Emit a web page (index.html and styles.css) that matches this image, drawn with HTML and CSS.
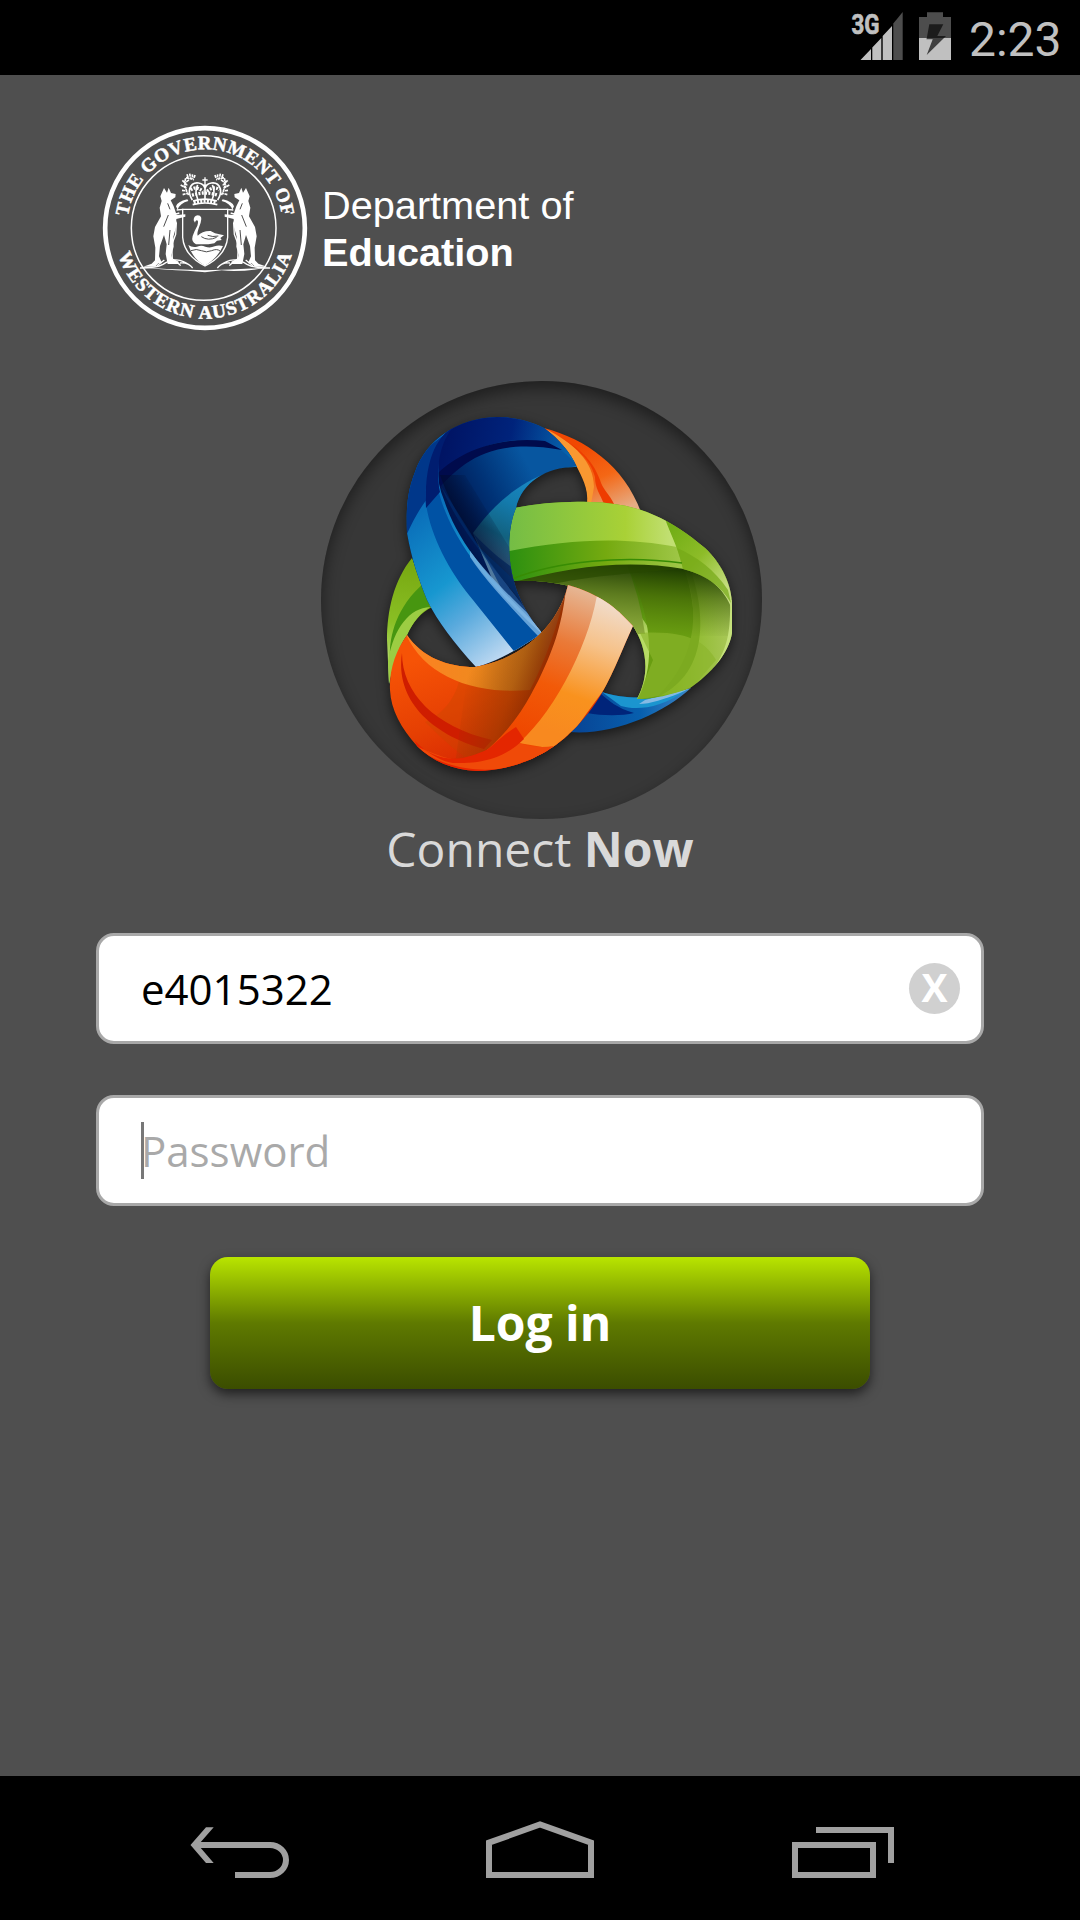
FILE: index.html
```html
<!DOCTYPE html>
<html lang="en">
<head>
<meta charset="utf-8">
<title>Connect Now</title>
<link rel="stylesheet" href="styles.css">
</head>
<body>
<header class="status">
  <svg class="signal" viewBox="850 0 56 75" width="56" height="75">
    <text class="network" x="851.5" y="33.7" textLength="28" lengthAdjust="spacingAndGlyphs">3G</text>
    <path fill="#c0c0c0" d="M860.5 60 871 49v11zM872.3 60V47.5L881.3 38v22zM882.7 60V36L892 26v34z"/>
    <path fill="#4d4d4d" d="M893.3 60V23.5L902.7 12v48z"/>
  </svg>
  <svg class="battery" viewBox="919 0 32 75" width="32" height="75">
    <path fill="#4d4d4d" d="M927 12.3h16V17h8v21h-32V17h8z"/>
    <path fill="#c0c0c0" d="M919 38h32v22h-32z"/>
    <path fill="#1c1c1c" d="M929.3 24.3h14L937.3 36h8.700l-2 2h-17.200z"/>
    <path fill="#404040" d="M926.8 38H944l-17.300 17 6-15.700h-6.300z"/>
  </svg>
  <span class="clock">2:23</span>
</header>

<main class="screen">
  <div class="brand">
    <svg class="seal" viewBox="0 0 690 675" width="230" height="225">
      <defs>
        <path id="arc-top" d="M114.500 370A233 233 0 1 1 575.500 370"/>
        <path id="arc-bottom" d="M73 339A272 272 0 0 0 617 339"/>
      </defs>
      <circle class="ring" cx="345" cy="339" r="299.500" stroke-width="14"/>
      <circle class="ring" cx="341" cy="339" r="217" stroke-width="4.500"/>
      <text class="motto"><textPath href="#arc-top" startOffset="50%" text-anchor="middle" textLength="668">THE GOVERNMENT OF</textPath></text>
      <text class="motto"><textPath href="#arc-bottom" startOffset="50%" text-anchor="middle" textLength="690">WESTERN AUSTRALIA</textPath></text>

      <!-- supporters, plume and foliage, one half mirrored to the other -->
      <defs>
        <g id="half">
          <path fill="#fff" d="M222 219l9 14 5-15 7 16 14 3-1 10-14 9 9 18 9 26 26-2v7l-27 7-1 25-8 28 1 30-7 25 4 17 17 4v6h-32l-6-30 3-29-8-28-12 33-3 31 9 21h-11l-10 10h-36l26-9 10-10 1-38-6-34 5-28 18-32-4-26 6-20-4-14z"/>
          <path class="cut" d="M235 300l-14 35M240 345l-4 45M233 265l7 18M219 375l-6 35"/>
          <path class="line" d="M251 306l8 18-2 34-12 32 2 42 18 10M223 435l-22 17"/>
          <path fill="#fff" d="M258 274q4-14 34-21l3 5q-25 6-32 26z"/>
          <path class="line" d="M280 283l-20 2M268 294q-22 8-20-5"/>
          <path class="leaf" d="M291 178l5 14M299 176l3 15M307 178l1 13M315 180l-3 10M288 188l24 6M277 196l16 16M272 210l18 10M276 226l15 2M278 239l17-5M287 190q-7 24 9 50M297 195q-16 8-14 22"/>
          <path class="line" d="M150 459q50 0 69-11 27-18 51-12 22 7 32 17M270 444q25-2 38 15M246 438q16 2 26 14"/>
        </g>
      </defs>
      <use href="#half"/>
      <use href="#half" transform="matrix(-1 0 0 1 690 0)"/>
      <path fill="#fff" d="M150 457q195 17 387 0-80 15-142 9l-50 6-52-5q-68-1-143-10z"/>

      <!-- crown -->
      <path class="crown" d="M307 255q-12-20-8-34 7-20 27-17 15 2 19 16 4-14 19-16 20-3 27 17 4 14-8 34M309 258q36-11 72 0M308 269q38-10 74 0M345 205v45M323 210q-10 18 0 42M367 210q10 18 0 42"/>
      <path class="beads" d="M302 225q15-14 37 4M351 229q22-18 37-4M306 241q39-14 78 0M311 263q34-9 68 0"/>
      <path class="line" d="M345 187v18M337 195h16"/>

      <!-- shield with the black swan -->
      <path class="shield" d="M278 283h135v84q-5 54-68 86-63-32-67-86z"/>
      <path fill="#fff" d="M295 390q12 9 26 5 13-5 25 0 14 5 28-1 11-5 25-1-17 37-54 59-36-19-50-62z"/>
      <path class="cut" d="M303 407q16-7 31 0t31 0 25 1"/>
      <path fill="#fff" d="M311 316q0-14 12-15 16 1 9 22-13 33-9 39 14-15 39-14l13 7 27 6-11 8 4 6-14 2-8 8-18 3h-37q-15-8-10-25 4-13 14-31 5-16-2-16-4 1-5 7z"/>
      <path class="cut" d="M334 365q20 14 46 2M353 361q15 6 32 2"/>
    </svg>
    <div class="agency">Department of<br><b>Education</b></div>
  </div>

  <div class="disc">
    <svg class="knot" viewBox="321 381 441 438" width="441" height="438">
      <defs>
        <linearGradient id="b-front" gradientUnits="userSpaceOnUse" x1="410" y1="520" x2="515" y2="655">
          <stop offset="0" stop-color="#0a6fba"/><stop offset=".42" stop-color="#1797d0"/><stop offset=".65" stop-color="#5aaadd"/><stop offset="1" stop-color="#c9def4"/>
        </linearGradient>
        <linearGradient id="b-top" gradientUnits="userSpaceOnUse" x1="445" y1="440" x2="570" y2="465">
          <stop offset="0" stop-color="#001464"/><stop offset=".5" stop-color="#00237b"/><stop offset="1" stop-color="#0768b0"/>
        </linearGradient>
        <linearGradient id="b-in" gradientUnits="userSpaceOnUse" x1="455" y1="520" x2="535" y2="478">
          <stop offset="0" stop-color="#00154d"/><stop offset=".5" stop-color="#003377"/><stop offset="1" stop-color="#0756a0"/>
        </linearGradient>
        <linearGradient id="b-teal" gradientUnits="userSpaceOnUse" x1="545" y1="470" x2="495" y2="570">
          <stop offset="0" stop-color="#1b8dcb"/><stop offset=".4" stop-color="#147bad"/><stop offset=".7" stop-color="#12617f"/><stop offset="1" stop-color="#50799e"/>
        </linearGradient>
        <linearGradient id="b-crease" gradientUnits="userSpaceOnUse" x1="466" y1="550" x2="505" y2="525">
          <stop offset="0" stop-color="#000b2c" stop-opacity=".95"/><stop offset="1" stop-color="#000b2c" stop-opacity="0"/>
        </linearGradient>
        <linearGradient id="g-top" gradientUnits="userSpaceOnUse" x1="510" y1="0" x2="732" y2="0">
          <stop offset="0" stop-color="#74bd45"/><stop offset=".52" stop-color="#a9d136"/><stop offset=".72" stop-color="#c1df72"/><stop offset="1" stop-color="#c1df72"/>
        </linearGradient>
        <linearGradient id="g-mid" gradientUnits="userSpaceOnUse" x1="510" y1="0" x2="685" y2="0">
          <stop offset="0" stop-color="#2d9010"/><stop offset=".55" stop-color="#75aa10"/><stop offset="1" stop-color="#a1c84a"/>
        </linearGradient>
        <linearGradient id="g-right" gradientUnits="userSpaceOnUse" x1="670" y1="530" x2="728" y2="585">
          <stop offset="0" stop-color="#72ae16"/><stop offset=".5" stop-color="#8dbc28"/><stop offset="1" stop-color="#c5dd80"/>
        </linearGradient>
        <linearGradient id="g-in" gradientUnits="userSpaceOnUse" x1="640" y1="0" x2="732" y2="0">
          <stop offset="0" stop-color="#67a713"/><stop offset=".4" stop-color="#85b61e"/><stop offset="1" stop-color="#aac85a"/>
        </linearGradient>
        <linearGradient id="g-shade" gradientUnits="userSpaceOnUse" x1="630" y1="564" x2="625" y2="632">
          <stop offset="0" stop-color="#142f00" stop-opacity=".92"/><stop offset=".45" stop-color="#2c4b00" stop-opacity=".5"/><stop offset="1" stop-color="#385c00" stop-opacity="0"/>
        </linearGradient>
        <linearGradient id="g-back" gradientUnits="userSpaceOnUse" x1="405" y1="565" x2="392" y2="680">
          <stop offset="0" stop-color="#78a912"/><stop offset=".5" stop-color="#8abf24"/><stop offset="1" stop-color="#c6e58b"/>
        </linearGradient>
        <linearGradient id="o-right" gradientUnits="userSpaceOnUse" x1="610" y1="595" x2="560" y2="735">
          <stop offset="0" stop-color="#f0e0d5"/><stop offset=".35" stop-color="#f6c28a"/><stop offset=".72" stop-color="#f9921e"/><stop offset="1" stop-color="#f8891f"/>
        </linearGradient>
        <linearGradient id="o-mid" gradientUnits="userSpaceOnUse" x1="580" y1="590" x2="530" y2="735">
          <stop offset="0" stop-color="#e6b592"/><stop offset=".35" stop-color="#ea7a38"/><stop offset=".65" stop-color="#f25a08"/><stop offset="1" stop-color="#ef4800"/>
        </linearGradient>
        <linearGradient id="o-in" gradientUnits="userSpaceOnUse" x1="415" y1="660" x2="455" y2="765">
          <stop offset="0" stop-color="#f65306"/><stop offset=".6" stop-color="#e64003"/><stop offset="1" stop-color="#da2c02"/>
        </linearGradient>
        <linearGradient id="o-shade" gradientUnits="userSpaceOnUse" x1="468" y1="675" x2="540" y2="700">
          <stop offset="0" stop-color="#8a3800" stop-opacity="0"/><stop offset=".6" stop-color="#8a3800" stop-opacity=".5"/><stop offset="1" stop-color="#852500" stop-opacity=".95"/>
        </linearGradient>
        <linearGradient id="o-lip" gradientUnits="userSpaceOnUse" x1="410" y1="0" x2="565" y2="0">
          <stop offset="0" stop-color="#fc8122"/><stop offset=".45" stop-color="#f08a1e"/><stop offset=".85" stop-color="#c98426"/><stop offset="1" stop-color="#c9926c"/>
        </linearGradient>
        <linearGradient id="o-back" gradientUnits="userSpaceOnUse" x1="590" y1="440" x2="622" y2="510">
          <stop offset="0" stop-color="#f14802"/><stop offset=".5" stop-color="#f46715"/><stop offset="1" stop-color="#e6ac84"/>
        </linearGradient>
        <linearGradient id="b-back" gradientUnits="userSpaceOnUse" x1="580" y1="0" x2="690" y2="0">
          <stop offset="0" stop-color="#084797"/><stop offset=".55" stop-color="#075fae"/><stop offset="1" stop-color="#3d86c6"/>
        </linearGradient>
        <clipPath id="c-green"><path d="M514 508C540 503 565 501 590 502 640 503 672 520 705 548 722 564 732 585 732 605V633C729 653 711 674 690 688 670 695 655 699 637 699 651 673 646 646 633 626 620 612 605 600 569 586 550 581 530 580 513 581 507 560 508 530 514 508z"/></clipPath>
        <clipPath id="c-orange"><path d="M568 585C599 594 616 607 633 626 624 645 615 670 602 693 594 706 584 720 571 732 552 751 520 770 477 771 452 770 432 761 417 746 401 728 391 710 390 690 389 670 396 650 407 635 422 657 447 667 475 667 521 659 558 627 568 585z"/></clipPath>
        <clipPath id="c-blue"><path d="M497 417C517 417 532 422 544 428 560 440 570 452 577 467 549 466 522 481 516 508 506 532 507 568 519 596 525 611 533 622 542 633 525 645 498 662 476 667 454 643 438 622 427 600 418 577 412 561 407 533 406 504 408 490 415 472 426 440 457 418 497 417z"/></clipPath>
      </defs>

      <!-- rear loops -->
      <path fill="url(#o-back)" d="M544 428C586 439 624 466 641 512L588 504C588 490 585 478 577 467 570 452 560 440 544 428z"/>
      <path fill="#f99831" d="M546 429C574 443 594 462 594 487L591 504h-4C589 488 581 476 577 467 569 451 560 440 546 429z"/>
      <path fill="#ee3c00" d="M553 433C577 446 592 458 600 480 603 490 609 493 615 506L604 504C600 494 595 488 595 477 591 459 573 444 553 433z"/>
      <path fill="url(#g-back)" d="M412 558C394 580 387 610 387 640L389 684C393 660 400 643 407 635 414 620 421 613 432 607z"/>
      <path fill="#479610" d="M424 583C397 606 389 636 390 657 402 627 415 614 430 607z"/>
      <path fill="#9ccd43" d="M430 607C410 608 394 627 388 661L389 684C395 659 400 644 407 635 413 622 420 613 430 607z"/>
      <path fill="url(#b-back)" d="M602 692C631 702 668 697 691 688 664 713 613 736 569 732z"/>
      <path fill="#1b95cf" d="M602 692C631 702 668 697 688 689 659 710 635 710 621 706z"/>
      <path fill="#00247a" d="M600 693C609 701 617 708 634 713 622 716 603 716 587 713z"/>
      <path fill="#85bae4" d="M645 700L691 688 680 693C665 699 650 704 639 704z"/>

      <!-- green loop -->
      <g clip-path="url(#c-green)">
        <path fill="url(#g-in)" d="M500 500h240v205H500z"/>
        <path fill="#b7da65" d="M602 596C630 600 648 620 653 640 656 667 645 688 636 701L620 700z"/>
        <path fill="#8dab3d" d="M500 560H625Q640 596 645 634H620z"/>
        <path fill="#699d11" d="M627 563C650 615 658 660 637 701 690 700 707 638 684 567z"/>
        <path fill="#8cb62c" d="M640 633C690 630 706 643 716 660L690 690 637 700 653 660z" opacity=".65"/>
        <path fill="#7caa20" d="M683 567C698 600 702 655 657 697 713 672 703 606 691 571z"/>
        <path fill="url(#g-shade)" d="M500 561h242v75H500z"/>
        <path fill="#c5e17b" d="M730 600C731 640 725 656 704 680L714 674 737 635V600z"/>
        <path fill="#284800" d="M500 584C560 565 615 560 684 568 665 572 573 575 542 588z" opacity=".65"/>
        <path fill="url(#g-mid)" d="M500 535H677L684 569C626 559 568 566 500 586z"/>
        <path fill="url(#g-top)" d="M500 500H658L677 547C625 537 570 538 500 553z"/>
        <path fill="url(#g-right)" d="M665 519C672 537 680 553 683 569 711 576 724 590 731 607L741 590 706 540z"/>
        <path fill="#75a817" d="M677 548C696 556 715 570 728 590L731 603C721 586 706 575 683 569z" opacity=".7"/>
        <path fill="none" stroke="#388c04" stroke-width="1.500" d="M512 579C557 561 624 555 682 563"/>
      </g>

      <!-- blue loop -->
      <g clip-path="url(#c-blue)">
        <path fill="url(#b-in)" d="M400 410h185v262H400z"/>
        <path fill="url(#b-teal)" d="M473 533C497 500 531 470 580 466L590 520 530 670z"/>
        <path fill="#002f75" d="M473 533C487 548 500 559 513 568L540 633 520 625z" opacity=".7"/>
        <path fill="url(#b-top)" d="M430 405H555L577 465C563 450 554 444 544 442 510 435 467 446 438 477z"/>
        <path fill="#000b4c" d="M437 474C463 448 505 436 545 441L562 450C496 438 466 458 440 487z"/>
        <path fill="url(#b-crease)" d="M440 475C452 510 473 542 525 608L545 606 500 532 465 475z"/>
        <path fill="url(#b-front)" d="M465 417C436 433 432 472 444 500 458 543 490 581 543 631L520 672H475L400 600V410z"/>
        <path fill="#00378a" d="M470 415C440 426 433 458 439 485 424 501 416 514 406 536L398 470z"/>
        <path fill="#0052a4" d="M438 455C427 475 423 490 427 510 434 545 454 577 473 600L517 655 543 635C495 591 453 545 439 493z"/>
        <path fill="#001d70" d="M455 425C435 438 424 463 426 508L440 492C435 468 440 441 455 425z"/>
        <path fill="#75afe0" d="M470 557C485 580 509 605 538 636L544 629C516 602 490 578 470 551z" opacity=".85"/>
        <path fill="#00306f" d="M441 486C461 536 506 581 543 628L541 605 480 548z" opacity=".55"/>
      </g>

      <!-- orange loop -->
      <g clip-path="url(#c-orange)">
        <path fill="url(#o-in)" d="M380 580h265v200H380z"/>
        <path fill="#c04a00" d="M459 681C455 700 440 716 425 722 440 736 460 757 475 762L550 700V685z" opacity=".3"/>
        <path fill="url(#o-lip)" d="M404 630C422 675 471 695 530 690 546 660 558 624 569 580L500 640z"/>
        <path fill="#cf1d00" d="M402 653C402 693 435 727 492 740L484 749C430 734 395 699 402 653z"/>
        <path fill="url(#o-shade)" d="M569 578C560 600 510 640 470 655L455 764 500 750C548 712 562 648 575 588z"/>
        <path fill="#e82400" d="M415 741C430 758 450 761 463 758 487 752 500 744 512 731L560 700 580 780H430z"/>
        <path fill="url(#o-mid)" d="M567 580C563 620 556 644 540 677 528 701 516 724 487 750L540 762 620 640V580z"/>
        <path fill="url(#o-right)" d="M598 588C592 637 558 708 519 743L560 750 640 640V590z"/>
        <path fill="#f04a08" d="M519 743C530 747 542 748 554 746 521 776 453 780 411 743 453 766 488 768 519 743z"/>
        <path fill="#e42600" d="M487 750C498 741 507 732 516 727L524 739C504 759 480 764 453 763 443 762 432 755 425 750 448 765 475 758 487 750z"/>
      </g>
    </svg>
  </div>

  <h1 class="product">Connect <b>Now</b></h1>

  <form class="login">
    <div class="field">
      <span class="value">e4015322</span>
      <span class="clear">X</span>
    </div>
    <div class="field">
      <span class="caret"></span><span class="hint">Password</span>
    </div>
    <button class="submit" type="button">Log in</button>
  </form>
</main>

<nav class="system">
  <svg viewBox="180 1776 120 144" width="120" height="144">
    <path fill="#a0a0a0" d="M190.500 1845l15.500-17.700h7.700L200.800 1842H270a19 18 0 0 1 0 36h-35v-6h35a13 12 0 0 0 0-24h-69.200l12.900 15H206z"/>
  </svg>
  <svg viewBox="480 1776 120 144" width="120" height="144">
    <path class="outline" d="M489 1842.700l51-18.200 51 18.200V1875H489z"/>
  </svg>
  <svg viewBox="780 1776 120 144" width="120" height="144">
    <path class="outline" d="M795 1845h78v30h-78zM816 1830h75v33"/>
  </svg>
</nav>
</body>
</html>
```

FILE: styles.css
```css
* { box-sizing: border-box; }

body {
  margin: 0;
  width: 1080px;
  height: 1920px;
  display: flex;
  flex-direction: column;
  overflow: hidden;
  background: #4f4f4f;
  font-family: "Open Sans", "Noto Sans", sans-serif;
}

svg { display: block; flex: none; }

.status {
  height: 75px;
  flex: none;
  display: flex;
  justify-content: flex-end;
  padding-right: 18px;
  background: #000;
}
.battery { margin-left: 13px; }
.network { font: 700 27px Roboto, sans-serif; fill: #c0c0c0; stroke: #c0c0c0; stroke-width: .7; }
.clock {
  width: 93px;
  margin-left: 18px;
  font: 400 48px/79px Roboto, sans-serif;
  color: #c0c0c0;
  white-space: nowrap;
}

.screen {
  flex: 1;
  display: flex;
  flex-direction: column;
  align-items: center;
}

.brand {
  align-self: stretch;
  display: flex;
  height: 225px;
  padding-left: 90px;
  margin-top: 40px;
}
.agency {
  padding: 67px 0 0 2px;
  font: 39.7px/47px "Liberation Sans", Arial, sans-serif;
  color: #fff;
  white-space: nowrap;
}
.ring { fill: none; stroke: #fff; }
.motto { font: 700 57px "Liberation Serif", serif; fill: #fff; stroke: #fff; stroke-width: 1.5; }
.line, .leaf, .crown, .beads, .shield { fill: none; stroke: #fff; stroke-width: 4; }
.leaf { stroke-width: 5; stroke-dasharray: 9 2; }
.crown { stroke-width: 5; }
.beads { stroke-width: 10; stroke-dasharray: 6 4; }
.cut { fill: none; stroke: #4f4f4f; stroke-width: 3; }

.disc {
  width: 441px;
  height: 438px;
  margin: 41px 0 0 3px;
  border-radius: 50%;
  background: #373737;
  box-shadow: inset 0 7px 16px rgba(0, 0, 0, .45);
}
.knot { filter: drop-shadow(0 4px 6px rgba(0, 0, 0, .55)); }

.product {
  margin: 0;
  font-size: 48px;
  line-height: 60px;
  font-weight: 400;
  color: #d9d9d9;
}

.login {
  width: 888px;
  margin-top: 54px;
  display: flex;
  flex-direction: column;
  align-items: center;
  gap: 51px;
}
.field {
  width: 100%;
  height: 111px;
  display: flex;
  align-items: center;
  padding: 0 21px 0 42px;
  border: 3px solid #a8a8a8;
  border-radius: 18px;
  background: #fff;
  font-size: 42px;
  line-height: 57px;
  color: #000;
}
.clear {
  width: 51px;
  height: 51px;
  margin-left: auto;
  border-radius: 50%;
  background: #d0d0d0;
  color: #fff;
  font-size: 39px;
  font-weight: 700;
  line-height: 48px;
  text-align: center;
}
.caret { width: 3px; height: 57px; margin-right: -3px; background: #777; }
.hint { color: #a9a9a9; }

.submit {
  width: 660px;
  height: 132px;
  padding: 0 0 2px;
  border: 0;
  border-radius: 18px;
  background: linear-gradient(#b9e500, #5f7a00 50%, #3b4d00);
  box-shadow: 0 5px 12px rgba(0, 0, 0, .6);
  font: 700 48px/65px "Open Sans", "Noto Sans", sans-serif;
  color: #fff;
}

.system {
  height: 144px;
  flex: none;
  display: flex;
  gap: 180px;
  padding-left: 180px;
  background: #000;
}
.outline { fill: none; stroke: #a0a0a0; stroke-width: 6; }
```
